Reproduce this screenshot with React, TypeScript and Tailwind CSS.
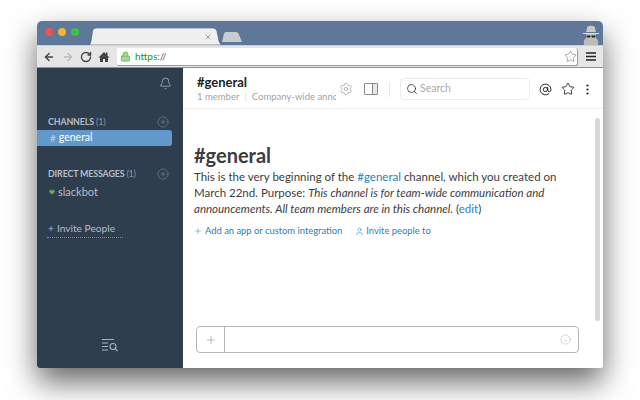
import React from "react";
import { ArrowLeft, ArrowRight, RotateCw, Lock, X, Star, Bell, Settings, Search, AtSign, CirclePlus, Plus, User, Smile, Heart } from "lucide-react";

function SectionHead({ title, count }: { title: string; count: string }) {
  return (
    <div className="flex items-center justify-between pl-[11px] pr-[14px] h-[16px]">
      <span className="text-[8.9px] font-bold text-[#b4bcc6] tracking-[-0.15px]">
        {title} <span className="font-normal text-[#8a96a5]">{count}</span>
      </span>
      <CirclePlus size={12} strokeWidth={1} className="text-[#8a96a5]" />
    </div>
  );
}

export default function App() {
  return (
    <div className="w-[640px] h-[400px] bg-white overflow-hidden pt-[21px] pl-[37px] font-['Lato','Open_Sans',sans-serif]">
      <div className="w-[566px] h-[347px] rounded-t-[5px] rounded-b-[3px] overflow-hidden flex flex-col shadow-[0_14px_30px_rgba(0,0,0,0.6)]">
        {/* Tab strip */}
        <div className="h-[24px] shrink-0 bg-[#5f7899] flex items-end relative">
          <div className="flex items-center gap-[5px] pl-[8px] self-start pt-[7px]">
            <span className="w-[8px] h-[8px] rounded-full bg-[#ef5350]" />
            <span className="w-[8px] h-[8px] rounded-full bg-[#f2b430]" />
            <span className="w-[8px] h-[8px] rounded-full bg-[#3cc14c]" />
          </div>
          <div className="ml-[9px] w-[134px] h-[17px] relative flex items-center justify-end pr-[10px]">
            <svg width="134" height="17" viewBox="0 0 134 17" className="absolute left-0 top-0">
              <path d="M0 17 Q2.500 17 3 13 L4.500 3 Q5 0 8 0 H125 Q128 0 129 3 L131 13 Q132 16.500 134 17 Z" fill="#efeff0" stroke="#3f5470" strokeWidth="0.6" />
            </svg>
            <X size={8} strokeWidth={2} className="text-[#777] relative" />
          </div>
          <svg width="21" height="10" viewBox="0 0 21 10" className="-ml-[1px] mb-[3px]">
            <path d="M1 10 L3 1.500 Q3.300 0 5 0 H15 Q17 0 17.500 1.500 L21 10 Z" fill="#c9ccd1" />
          </svg>
          <svg width="22" height="22" viewBox="0 0 22 22" className="absolute right-[1px] bottom-0">
            <path d="M6 9 L7.500 3.500 Q11 2 14.500 3.500 L16 9 Z" fill="#c8c8c4" />
            <path d="M3 10 H19 V11 H3 Z" fill="#dcdcd8" />
            <path d="M4 22 Q3 17 6 15 V11 H16 V15 Q19 17 18 22 Z" fill="#bcbcb8" />
            <path d="M6.500 12.500 H10.500 V14 Q8.500 15 6.500 14 Z M11.500 12.500 H15.500 V14 Q13.500 15 11.500 14 Z" fill="#222" />
          </svg>
        </div>
        {/* Toolbar */}
        <div className="h-[23px] shrink-0 bg-[#e6e6e6] border-t border-[#cfcfcf] border-b border-b-[#8f8f8f] flex items-center pl-[6px] pr-[5px]">
          <ArrowLeft size={12} strokeWidth={2.8} className="text-[#444]" />
          <ArrowRight size={12} strokeWidth={2.8} className="text-[#bcbcbc] ml-[7px]" />
          <RotateCw size={12} strokeWidth={2.8} className="text-[#444] ml-[6px]" />
          <svg width="12" height="12" viewBox="0 0 12 12" className="ml-[6px]">
            <path d="M6 1 L0.500 6.500 H2 V11 H5 V8 H7 V11 H10 V6.500 H11.500 L9.500 4.500 V1.500 H8 V3 Z" fill="#444" />
          </svg>
          <div className="ml-[7px] w-[461px] h-[18px] bg-white rounded-[2px] border-b border-r border-[#9a9a9a] flex items-center pl-[3px]">
            <Lock size={11} strokeWidth={2} className="text-[#6fbb57] fill-[#a5d98f]" />
            <span className="ml-[4px] text-[10px] leading-none text-[#1a9a10]">
              https<span className="text-[#666]">://</span>
            </span>
            <Star size={13} strokeWidth={1} className="ml-auto text-[#666]" />
          </div>
          <svg width="10" height="9" viewBox="0 0 10 9" className="ml-[8px]">
            <path d="M0 1 H10 M0 4.500 H10 M0 8 H10" stroke="#222" strokeWidth="1.700" />
          </svg>
        </div>
        {/* App */}
        <div className="flex-1 flex min-h-0 bg-white">
          <aside className="w-[146px] shrink-0 bg-[#2f3e4f] flex flex-col">
            <div className="h-[30px] flex justify-end items-center pr-[11px]">
              <Bell size={13} strokeWidth={1.2} className="text-[#c4cad1]" />
            </div>
            <div className="mt-[16px]">
              <SectionHead title="CHANNELS" count="(1)" />
            </div>
            <div className="w-[135px] h-[16px] bg-[#6298cc] rounded-r-[3px] flex items-center pl-[13px] text-[10.5px] text-white">
              <span className="text-[#bdd3ea] mr-[3px] text-[10px]">#</span>general
            </div>
            <div className="mt-[20px]">
              <SectionHead title="DIRECT MESSAGES" count="(1)" />
            </div>
            <div className="mt-[2px] h-[16px] flex items-center pl-[12px] text-[11px] text-[#b4bcc6]">
              <Heart size={6} className="text-[#6ea85a] fill-[#6ea85a] mr-[3px]" />
              slackbot
            </div>
            <div className="mt-[21px] ml-[10px] w-[76px] h-[17px] border-b border-dotted border-[#7f8b9a] flex items-center text-[10.2px] text-[#b4bcc6] whitespace-nowrap">
              <span className="mr-[3px] ml-[1px]">+</span>Invite People
            </div>
            <div className="mt-auto h-[30px] flex justify-center items-start">
              <svg width="18" height="14" viewBox="0 0 18 14" fill="none" stroke="#a9b3be" strokeWidth="1.1">
                <path d="M1 1.500 H13 M1 5 H7 M1 8.500 H7 M1 12 H7" />
                <circle cx="12" cy="8.500" r="3" />
                <path d="M14.200 10.700 L16.500 13" />
              </svg>
            </div>
          </aside>
          <main className="flex-1 min-w-0 flex flex-col">
            <header className="h-[41px] shrink-0 border-b border-[#efefef] flex items-center pl-[14px] pt-[2px]">
              <div className="w-[139px] overflow-hidden whitespace-nowrap -mt-[1px]">
                <div className="text-[13px] leading-[15px] font-bold text-[#222]">#general</div>
                <div className="text-[9.5px] leading-[13px] text-[#a3a3a3]">
                  1 member<span className="mx-[5px] text-[#e0e0e0]">|</span>Company-wide announcements
                </div>
              </div>
              <Settings size={14} strokeWidth={1} className="ml-[3px] text-[#8a8a8a]" />
              <div className="ml-[11px] w-[14px] h-[12px] border border-[#8a8a8a] rounded-[1px] flex justify-end">
                <div className="w-[5px] border-l border-[#8a8a8a] bg-[#e8e8e8]" />
              </div>
              <div className="ml-[11px] w-px h-[15px] bg-[#e8e8e8]" />
              <div className="ml-[10px] w-[130px] h-[22px] border border-[#ececec] rounded-[4px] flex items-center pl-[5px]">
                <Search size={12} strokeWidth={1.6} className="text-[#333]" />
                <span className="ml-[2px] text-[10.5px] text-[#aaa]">Search</span>
              </div>
              <AtSign size={13} strokeWidth={1.8} className="ml-[9px] text-[#222]" />
              <Star size={14} strokeWidth={1.5} className="ml-[9px] text-[#222]" />
              <svg width="3" height="11" viewBox="0 0 3 11" className="ml-[11px]">
                <circle cx="1.500" cy="1.500" r="1.100" fill="#222" />
                <circle cx="1.500" cy="5.500" r="1.100" fill="#222" />
                <circle cx="1.500" cy="9.500" r="1.100" fill="#222" />
              </svg>
            </header>
            <div className="flex-1 min-h-0 flex">
              <div className="flex-1 min-w-0 flex flex-col pl-[11px] pr-[14px]">
                <div className="flex-1 pt-[34px]">
                  <h1 className="text-[20px] leading-[24px] font-bold text-[#3d3c40]">#general</h1>
                  <p className="mt-[2px] text-[11.5px] leading-[16px] text-[#3d3c40] w-[375px]">
                    This is the very beginning of the <span className="text-[#2a80b9]">#general</span> channel, which you created on March 22nd. Purpose: <em>This channel is for team-wide communication and announcements. All team members are in this channel.</em> (<span className="text-[#2a80b9]">edit</span>)
                  </p>
                  <div className="mt-[7px] flex items-center text-[9.4px] text-[#2a80b9] whitespace-nowrap">
                    <Plus size={8} strokeWidth={1.5} />
                    <span className="ml-[3px]">Add an app or custom integration</span>
                    <User size={9} strokeWidth={1.4} className="ml-[13px]" />
                    <span className="ml-[2px]">Invite people to</span>
                  </div>
                </div>
                <div className="mb-[15px] ml-[2px] w-[383px] h-[27px] border border-[#b5b5b5] rounded-[4px] flex items-center">
                  <div className="w-[28px] h-full border-r border-[#b5b5b5] flex items-center justify-center">
                    <Plus size={12} strokeWidth={1} className="text-[#777]" />
                  </div>
                  <Smile size={11} strokeWidth={1} className="ml-auto mr-[7px] text-[#aaa]" />
                </div>
              </div>
              <div className="w-[8px] shrink-0 pt-[9px] flex justify-start">
                <div className="w-[5px] h-[203px] rounded-full bg-[#d8d8dc]" />
              </div>
            </div>
          </main>
        </div>
      </div>
    </div>
  );
}
